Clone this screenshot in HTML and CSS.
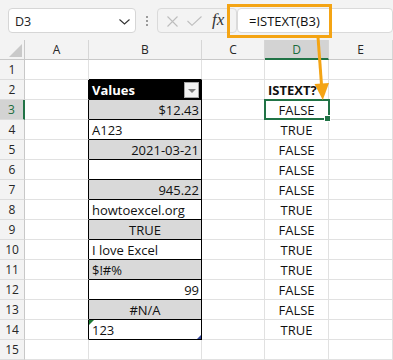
FILE: index.html
```html
<!DOCTYPE html>
<html lang="en">
<head>
    <meta charset="UTF-8">
    <meta name="viewport" content="width=device-width, initial-scale=1.0">
    <title>ISTEXT Function Example</title>
    <link rel="stylesheet" href="styles.css">
</head>
<body>
    <div class="toolbar">
        <div class="name-box">
            <span>D3</span>
            <svg class="chevron" width="11" height="6" viewBox="0 0 11 6"><path d="M0.5 0.5 L5.5 5 L10.5 0.5" fill="none" stroke="#333" stroke-width="1.1"/></svg>
        </div>
        <div class="grip"><i></i><i></i><i></i></div>
        <div class="edit-box">
            <svg width="11" height="11" viewBox="0 0 11 11"><path d="M0.5 0.5 L10.5 10.5 M10.5 0.5 L0.5 10.5" stroke="#bdbdbd" stroke-width="1.1"/></svg>
            <svg width="15" height="10" viewBox="0 0 15 10"><path d="M0.5 5 L5 9.3 L14.5 0.5" fill="none" stroke="#bdbdbd" stroke-width="1.1"/></svg>
            <span class="fx">fx</span>
        </div>
        <div class="formula">=ISTEXT(B3)</div>
    </div>

    <div class="sheet">
        <div class="corner"></div><div class="ch">A</div><div class="ch">B</div><div class="ch">C</div><div class="ch sel">D</div><div class="ch">E</div>

        <div class="rh">1</div><div class="c"></div><div class="c tb-top"></div><div class="c"></div><div class="c"></div><div class="c"></div>
        <div class="rh">2</div><div class="c tb-left"></div><div class="c tb tb-head">Values<span class="filter-btn"></span></div><div class="c"></div><div class="c bold">ISTEXT?</div><div class="c"></div>
        <div class="rh sel">3</div><div class="c tb-left"></div><div class="c tb band right">$12.43</div><div class="c"></div><div class="c center active">FALSE</div><div class="c"></div>
        <div class="rh">4</div><div class="c tb-left"></div><div class="c tb">A123</div><div class="c"></div><div class="c center">TRUE</div><div class="c"></div>
        <div class="rh">5</div><div class="c tb-left"></div><div class="c tb band right">2021-03-21</div><div class="c"></div><div class="c center">FALSE</div><div class="c"></div>
        <div class="rh">6</div><div class="c tb-left"></div><div class="c tb"></div><div class="c"></div><div class="c center">FALSE</div><div class="c"></div>
        <div class="rh">7</div><div class="c tb-left"></div><div class="c tb band right">945.22</div><div class="c"></div><div class="c center">FALSE</div><div class="c"></div>
        <div class="rh">8</div><div class="c tb-left"></div><div class="c tb">howtoexcel.org</div><div class="c"></div><div class="c center">TRUE</div><div class="c"></div>
        <div class="rh">9</div><div class="c tb-left"></div><div class="c tb band center">TRUE</div><div class="c"></div><div class="c center">FALSE</div><div class="c"></div>
        <div class="rh">10</div><div class="c tb-left"></div><div class="c tb">I love Excel</div><div class="c"></div><div class="c center">TRUE</div><div class="c"></div>
        <div class="rh">11</div><div class="c tb-left"></div><div class="c tb band">$!#%</div><div class="c"></div><div class="c center">TRUE</div><div class="c"></div>
        <div class="rh">12</div><div class="c tb-left"></div><div class="c tb right">99</div><div class="c"></div><div class="c center">FALSE</div><div class="c"></div>
        <div class="rh">13</div><div class="c tb-left"></div><div class="c tb band center">#N/A</div><div class="c"></div><div class="c center">FALSE</div><div class="c"></div>
        <div class="rh">14</div><div class="c tb-left"></div><div class="c tb tb-last text-num">123</div><div class="c"></div><div class="c center">TRUE</div><div class="c"></div>
        <div class="rh">15</div><div class="c"></div><div class="c"></div><div class="c"></div><div class="c"></div><div class="c"></div>
    </div>

    <!-- callout from the formula bar to D3 -->
    <svg class="callout" width="393" height="360" viewBox="0 0 393 360">
        <rect x="228.5" y="5.5" width="102" height="31" fill="none" stroke="#f4a414" stroke-width="3"/>
        <path d="M318 37 L321.6 86" stroke="#f4a414" stroke-width="3"/>
        <polygon points="314.5,84 329,83 322.8,100" fill="#f4a414"/>
    </svg>
</body>
</html>
```

FILE: styles.css
```css
body {
    margin: 0;
    width: 393px;
    height: 360px;
    overflow: hidden;
    background-color: #fff;
    font-family: "Open Sans", "Noto Sans", sans-serif;
    position: relative;
}
.toolbar {
    height: 40px;
    background-color: #f3f3f3;
    display: flex;
    align-items: flex-start;
    padding-top: 8px;
    box-sizing: border-box;
    overflow: hidden;
}
.name-box {
    margin-left: 8px;
    width: 128px;
    height: 25px;
    box-sizing: border-box;
    background-color: #fff;
    border: 1px solid #d6d6d6;
    border-radius: 4px;
    display: flex;
    align-items: center;
    justify-content: space-between;
    padding: 1px 5px 0 6px;
    font-size: 12.5px;
    color: #222;
}
.chevron {
    margin-top: 1px;
}
.grip {
    width: 21px;
    height: 25px;
    display: flex;
    flex-direction: column;
    align-items: center;
    justify-content: center;
    gap: 2px;
}
.grip i {
    width: 2px;
    height: 2px;
    background-color: #9a9a9a;
}
.edit-box {
    width: 80px;
    height: 25px;
    box-sizing: border-box;
    border: 1px solid #dadada;
    border-radius: 4px;
    display: flex;
    align-items: center;
    padding: 1px 0 0 9px;
    gap: 9px;
}
.fx {
    font-family: "Liberation Serif", serif;
    font-style: italic;
    font-size: 17px;
    color: #333;
    margin-left: 1px;
    margin-top: -2px;
}
.formula {
    flex: 1;
    height: 25px;
    box-sizing: border-box;
    background-color: #fff;
    border: 1px solid #dadada;
    border-radius: 4px;
    padding: 2px 0 0 11px;
    font-size: 13px;
    line-height: 20px;
    color: #111;
    white-space: nowrap;
}
.sheet {
    display: grid;
    grid-template-columns: 25px 64px 113px 63px 64px 64px;
    grid-auto-rows: 20px;
    font-family: "Open Sans", "Noto Sans", sans-serif;
    font-size: 13px;
    color: #111;
}
.corner, .ch, .rh {
    background-color: #f3f3f3;
    box-sizing: border-box;
    font-size: 12px;
    color: #262626;
    text-align: center;
}
.corner {
    border-right: 1px solid #c8c8c8;
    border-bottom: 1px solid #c8c8c8;
    position: relative;
}
.corner::after {
    content: "";
    position: absolute;
    right: 2px;
    bottom: 2px;
    width: 13px;
    height: 13px;
    background-color: #c9c9c9;
    clip-path: polygon(100% 0, 100% 100%, 0 100%);
}
.ch {
    border-right: 1px solid #d6d6d6;
    border-bottom: 1px solid #c8c8c8;
    padding-top: 1px;
    line-height: 18px;
}
.ch.sel {
    background-color: #d3d3d3;
    color: #1a6b3c;
    border-bottom: 2px solid #217346;
}
.rh {
    border-right: 1px solid #c8c8c8;
    border-bottom: 1px solid #dcdcdc;
    padding-top: 1px;
    line-height: 18px;
}
.rh.sel {
    background-color: #d3d3d3;
    color: #1a6b3c;
    border-right: 2px solid #217346;
}
.c {
    box-sizing: border-box;
    border-right: 1px solid #e1e1e1;
    border-bottom: 1px solid #e1e1e1;
    padding: 2px 3px 0;
    line-height: 17px;
    white-space: nowrap;
    overflow: hidden;
    position: relative;
}
.c.right {
    text-align: right;
    padding-right: 2px;
}
.c.center {
    text-align: center;
}
.c.bold {
    font-weight: bold;
    overflow: visible;
}
.tb-top {
    border-bottom-color: #000;
}
.tb-left {
    border-right-color: #000;
}
.tb {
    border-right-color: #000;
    border-bottom-color: #000;
}
.band {
    background-color: #d9d9d9;
}
.tb-head {
    background-color: #000;
    color: #fff;
    font-weight: bold;
}
.filter-btn {
    position: absolute;
    right: 2px;
    top: 2px;
    width: 15px;
    height: 16px;
    box-sizing: border-box;
    background-color: #f2f2f2;
    border: 1px solid #a6a6a6;
}
.filter-btn::after {
    content: "";
    position: absolute;
    left: 3px;
    top: 6px;
    border-left: 4px solid transparent;
    border-right: 4px solid transparent;
    border-top: 4px solid #7f7f7f;
}
.text-num::before {
    content: "";
    position: absolute;
    left: 0;
    top: 0;
    width: 5px;
    height: 5px;
    background-color: #1e7b34;
    clip-path: polygon(0 0, 100% 0, 0 100%);
}
.tb-last::after {
    content: "";
    position: absolute;
    right: 0;
    bottom: 0;
    width: 4px;
    height: 4px;
    background-color: #34469a;
    clip-path: polygon(100% 0, 100% 100%, 0 100%);
}
.active {
    overflow: visible;
}
.active::after {
    content: "";
    position: absolute;
    left: -1px;
    top: -1px;
    right: -2px;
    bottom: -1px;
    border: 2px solid #217346;
}
.active::before {
    content: "";
    position: absolute;
    right: -3px;
    bottom: -3px;
    width: 5px;
    height: 5px;
    background-color: #217346;
    border: 1px solid #fff;
    z-index: 1;
}
.callout {
    position: absolute;
    left: 0;
    top: 0;
    pointer-events: none;
}
```
